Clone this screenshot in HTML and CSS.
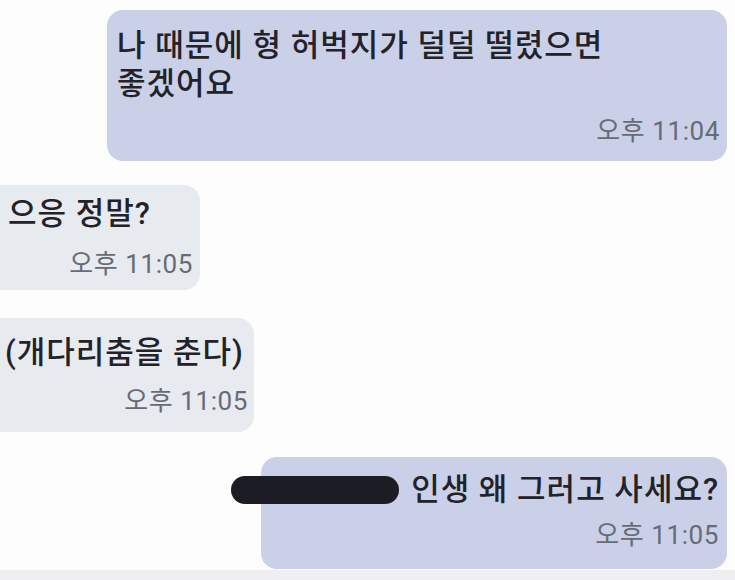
FILE: index.html
```html
<!DOCTYPE html>
<html lang="ko">
<head>
<meta charset="utf-8">
<link rel="stylesheet" href="styles.css">
</head>
<body>
<div class="chat">
  <div class="bubble mine b1">
    <div class="msg">나 때문에 형 허벅지가 덜덜 떨렸으면<br>좋겠어요</div>
    <div class="time">오후 11:04</div>
  </div>
  <div class="bubble theirs b2">
    <div class="msg">으응 정말?</div>
    <div class="time">오후 11:05</div>
  </div>
  <div class="bubble theirs b3">
    <div class="msg">(개다리춤을 춘다)</div>
    <div class="time">오후 11:05</div>
  </div>
  <div class="bubble mine b4">
    <span class="redact"></span>
    <div class="msg">인생 왜 그러고 사세요?</div>
    <div class="time">오후 11:05</div>
  </div>
</div>
</body>
</html>
```
FILE: styles.css
```css
html, body {
  margin: 0;
  padding: 0;
}
body {
  width: 735px;
  height: 580px;
  overflow: hidden;
  background: #fbfbfc;
  font-family: Roboto, "Noto Sans CJK KR", sans-serif;
  color: #222228;
}
.chat {
  display: flex;
  flex-direction: column;
  padding-top: 10px;
  height: 580px;
  box-sizing: border-box;
  background: linear-gradient(#fdfdfd 0, #fdfdfd 570px, #efeff1 570px);
}
.bubble {
  position: relative;
  display: flex;
  flex-direction: column;
  box-sizing: border-box;
}
.mine {
  align-self: flex-end;
  margin-right: 8px;
  background: #c9d0e7;
  border-radius: 16px;
  align-items: flex-start;
}
.theirs {
  align-self: flex-start;
  background: #e7eaef;
  border-radius: 0 16px 16px 0;
}
.msg {
  font-size: 31px;
  line-height: 38px;
  font-weight: 500;
  letter-spacing: 1px;
  white-space: nowrap;
}
.time {
  align-self: flex-end;
  font-size: 26px;
  line-height: 30px;
  letter-spacing: 0.6px;
  color: #676b76;
}
.b1 {
  width: 620px;
  height: 151px;
  padding: 17px 7px 0 10px;
}
.b1 .time { margin-top: 13px; }
.b2 {
  margin-top: 24px;
  width: 200px;
  height: 105px;
  padding: 10px 7px 0 8px;
}
.b2 .time { margin-top: 16px; }
.b3 {
  margin-top: 28px;
  width: 254px;
  height: 114px;
  padding: 16px 6px 0 5px;
}
.b3 .time { margin-top: 14px; }
.b4 {
  margin-top: 25px;
  width: 466px;
  height: 112px;
  padding: 14px 8px 0 0;
  align-items: flex-end;
}
.b4 .time { margin-top: 11px; }
.redact {
  position: absolute;
  left: -30px;
  top: 19px;
  width: 168px;
  height: 28px;
  border-radius: 14px;
  background: #1c1d24;
}
```
